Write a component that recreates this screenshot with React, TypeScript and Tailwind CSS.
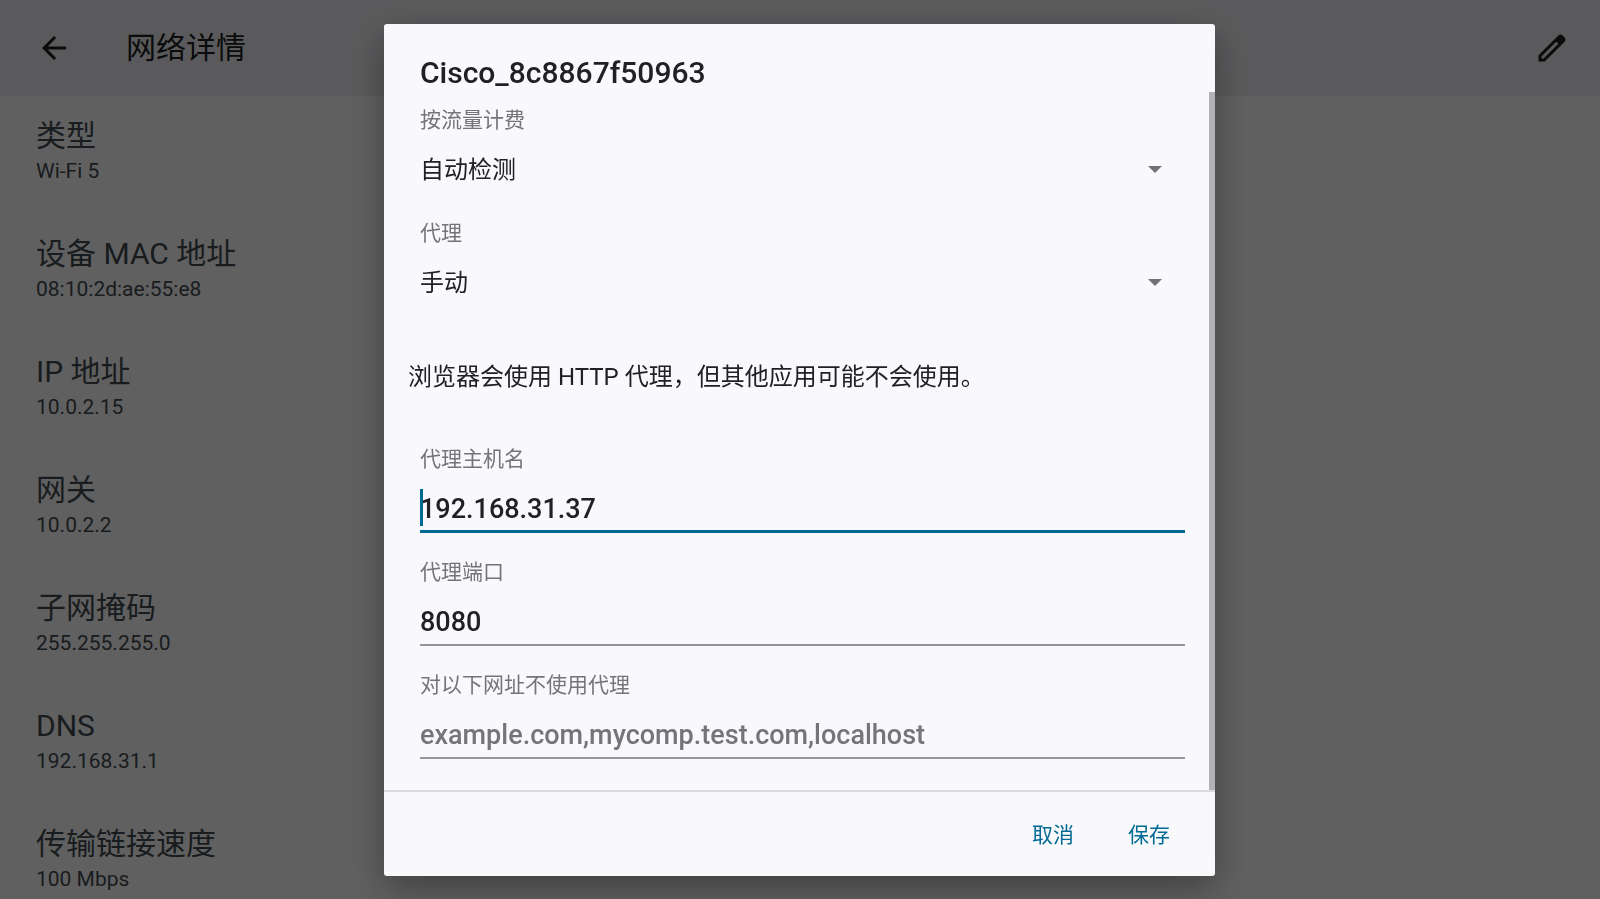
import { useState } from "react";
import type { ReactNode } from "react";
import { MdArrowBack } from "react-icons/md";
import clsx from "clsx";

const details = [
  { label: "类型", value: "Wi-Fi 5" },
  { label: "设备 MAC 地址", value: "08:10:2d:ae:55:e8" },
  { label: "IP 地址", value: "10.0.2.15" },
  { label: "网关", value: "10.0.2.2" },
  { label: "子网掩码", value: "255.255.255.0" },
  { label: "DNS", value: "192.168.31.1" },
  { label: "传输链接速度", value: "100 Mbps" },
];

function EditIcon() {
  return (
    <svg viewBox="0 0 24 24" className="size-9" fill="currentColor" aria-hidden="true">
      <path d="M20.41,4.94l-1.35-1.35c-0.78-0.78-2.05-0.78-2.83,0L3,16.82V21h4.18L20.41,7.77C21.2,6.99,21.2,5.72,20.41,4.94z M6.41,19.06L5,19v-1.36l9.82-9.82l1.41,1.41L6.41,19.06z" />
    </svg>
  );
}

function Field({ id, label, children }: { id: string; label: string; children: ReactNode }) {
  return (
    <div className="flex flex-col gap-2.5">
      <label htmlFor={id} className="text-[21px] leading-7 text-[#757577]">
        {label}
      </label>
      <div className="relative">{children}</div>
    </div>
  );
}

type SelectProps = {
  id: string;
  value: string;
  options: string[];
  onChange: (value: string) => void;
};

function Select({ id, value, options, onChange }: SelectProps) {
  return (
    <>
      <select
        id={id}
        value={value}
        onChange={(e) => onChange(e.target.value)}
        className="block h-[50px] w-full appearance-none bg-transparent pt-0.5 text-2xl text-[#202124] outline-none"
      >
        {options.map((option) => (
          <option key={option}>{option}</option>
        ))}
      </select>
      <svg
        viewBox="0 0 14 7"
        className="pointer-events-none absolute top-[22px] right-[23px] h-[7px] w-3.5 text-[#727274]"
        fill="currentColor"
        aria-hidden="true"
      >
        <path d="M0 0h14L7 7z" />
      </svg>
    </>
  );
}

type TextInputProps = {
  id: string;
  value: string;
  placeholder?: string;
  active?: boolean;
  onChange: (value: string) => void;
};

function TextInput({ id, value, placeholder, active, onChange }: TextInputProps) {
  return (
    <>
      <input
        id={id}
        type="text"
        value={value}
        placeholder={placeholder}
        onChange={(e) => onChange(e.target.value)}
        className={clsx(
          "block h-[50px] w-full bg-transparent pt-1 text-[27px] font-medium text-[#202124] outline-none placeholder:text-[#757577]",
          active ? "border-b-3 border-[#006a94]" : "border-b-2 border-[#969698]"
        )}
      />
      {/* Text cursor */}
      {active && <span className="absolute top-1.5 left-0 h-[37px] w-[3px] bg-[#006a94]" />}
    </>
  );
}

export default function App() {
  const [metered, setMetered] = useState("自动检测");
  const [proxy, setProxy] = useState("手动");
  const [host, setHost] = useState("192.168.31.37");
  const [port, setPort] = useState("8080");
  const [bypass, setBypass] = useState("");

  return (
    <div
      lang="zh-CN"
      className="h-screen overflow-hidden bg-[#f0f0f0] font-['Roboto','Noto_Sans_CJK_SC',sans-serif]"
    >
      <header className="flex h-24 items-center bg-[#e2e2e6] pr-[30px] pl-9 text-[#191c1d]">
        <button type="button" aria-label="返回">
          <MdArrowBack size={36} />
        </button>
        <h1 className="ml-[54px] flex-1 text-3xl">网络详情</h1>
        <button type="button" aria-label="修改">
          <EditIcon />
        </button>
      </header>

      <dl className="px-9 text-[#40484c]">
        {details.map((item) => (
          <div key={item.label} className="flex h-[118px] flex-col pt-[22px]">
            <dt className="text-[30px] leading-9">{item.label}</dt>
            <dd className="mt-[3px] text-[21px] leading-7">{item.value}</dd>
          </div>
        ))}
      </dl>

      {/* Dialog */}
      <div className="fixed inset-0 flex items-start justify-center bg-black/60 pt-6 pr-px">
        <form
          role="dialog"
          aria-labelledby="dialog-title"
          onSubmit={(e) => e.preventDefault()}
          className="w-full max-w-[831px] overflow-hidden rounded-[3px] bg-[#f9f9fc] shadow-[0_12px_36px_rgba(0,0,0,0.35)]"
        >
          <h2
            id="dialog-title"
            className="h-[68px] px-9 pt-[31px] text-[30px] leading-9 font-medium text-[#202124]"
          >
            Cisco_8c8867f50963
          </h2>

          <div className="flex">
            <div className="flex-1 pt-3.5 pr-6 pb-[31px] pl-9">
              <div className="flex flex-col gap-[25px]">
                <Field id="metered" label="按流量计费">
                  <Select
                    id="metered"
                    value={metered}
                    options={["自动检测", "按流量计费", "不按流量计费"]}
                    onChange={setMetered}
                  />
                </Field>
                <Field id="proxy" label="代理">
                  <Select
                    id="proxy"
                    value={proxy}
                    options={["无", "手动", "代理自动配置"]}
                    onChange={setProxy}
                  />
                </Field>
              </div>

              <p className="mt-[52px] mb-[50px] -ml-3 text-2xl leading-9 text-[#202124]">
                浏览器会使用 HTTP 代理，但其他应用可能不会使用。
              </p>

              <div className="flex flex-col gap-[25px]">
                <Field id="host" label="代理主机名">
                  <TextInput id="host" value={host} onChange={setHost} active />
                </Field>
                <Field id="port" label="代理端口">
                  <TextInput id="port" value={port} onChange={setPort} />
                </Field>
                <Field id="bypass" label="对以下网址不使用代理">
                  <TextInput
                    id="bypass"
                    value={bypass}
                    onChange={setBypass}
                    placeholder="example.com,mycomp.test.com,localhost"
                  />
                </Field>
              </div>
            </div>
            {/* Scrollbar */}
            <div className="w-1.5 bg-[#b2b2b4]" />
          </div>

          <div className="flex items-center justify-end border-t-2 border-[#dadadc] pt-5 pr-[18px] pb-4 text-[21px] text-[#006a94]">
            <button type="button" className="h-12 w-24">
              取消
            </button>
            <button type="submit" className="h-12 w-24">
              保存
            </button>
          </div>
        </form>
      </div>
    </div>
  );
}
